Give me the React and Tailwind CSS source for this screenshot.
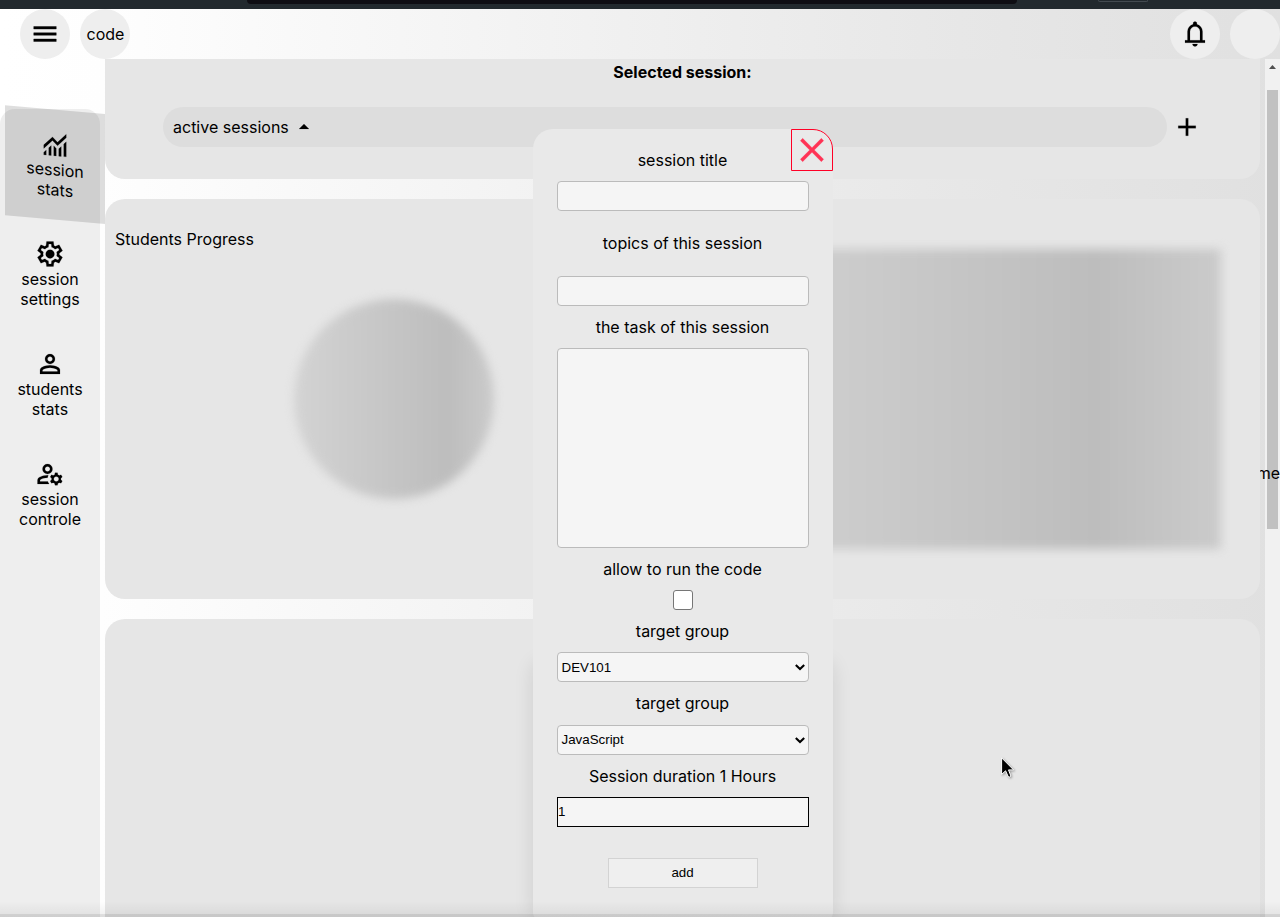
const PATHS = {
  menu: "M120-240v-80h720v80H120Zm0-200v-80h720v80H120Zm0-200v-80h720v80H120Z",
  bell: "M160-200v-80h80v-280q0-83 50-147.5T420-792v-28q0-25 17.5-42.5T480-880q25 0 42.5 17.5T540-820v28q80 20 130 84.5T720-560v280h80v80H160Zm320-300Zm0 420q-33 0-56.5-23.5T400-160h160q0 33-23.5 56.5T480-80ZM320-280h320v-280q0-66-47-113t-113-47q-66 0-113 47t-47 113v280Z",
  add: "M440-440H200v-80h240v-240h80v240h240v80H520v240h-80v-240Z",
  close: "m256-200-56-56 224-224-224-224 56-56 224 224 224-224 56 56-224 224 224 224-56 56-224-224-224 224Z",
  up: "m280-400 200-200 200 200H280Z",
  stats: "M120-120v-80l80-80v160h-80Zm160 0v-240l80-80v320h-80Zm160 0v-320l80 81v239h-80Zm160 0v-239l80-80v319h-80Zm160 0v-400l80-80v480h-80ZM120-327v-113l280-280 160 160 280-280v113L560-447 400-607 120-327Z",
  settings: "m370-80-16-128q-13-5-24.5-12T307-235l-119 50L78-375l103-78q-1-7-1-13.5v-27q0-6.5 1-13.5L78-585l110-190 119 50q11-8 23-15t24-12l16-128h220l16 128q13 5 24.5 12t22.5 15l119-50 110 190-103 78q1 7 1 13.5v27q0 6.5-2 13.5l103 78-110 190-118-50q-11 8-23 15t-24 12L590-80H370Zm70-80h79l14-106q31-8 57.5-23.5T639-327l99 41 39-68-86-65q5-14 7-29.5t2-31.5q0-16-2-31.5t-7-29.5l86-65-39-68-99 42q-22-23-48.5-38.5T533-694l-13-106h-79l-14 106q-31 8-57.5 23.5T321-633l-99-41-39 68 86 64q-5 15-7 30t-2 32q0 16 2 31t7 30l-86 65 39 68 99-42q22 23 48.5 38.5T427-266l13 106Zm42-180q58 0 99-41t41-99q0-58-41-99t-99-41q-59 0-99.5 41T342-480q0 58 40.5 99t99.5 41Zm-2-140Z",
  person: "M480-480q-66 0-113-47t-47-113q0-66 47-113t113-47q66 0 113 47t47 113q0 66-47 113t-113 47ZM160-160v-112q0-34 17.5-62.5T224-378q62-31 126-46.5T480-440q66 0 130 15.5T736-378q29 15 46.5 43.5T800-272v112H160Zm80-80h480v-32q0-11-5.5-20T700-306q-54-27-109-40.5T480-360q-56 0-111 13.5T260-306q-9 5-14.5 14t-5.5 20v32Zm240-320q33 0 56.5-23.5T560-640q0-33-23.5-56.5T480-720q-33 0-56.5 23.5T400-640q0 33 23.5 56.5T480-560Z",
  manage: "M400-480q-66 0-113-47t-47-113q0-66 47-113t113-47q66 0 113 47t47 113q0 66-47 113t-113 47ZM80-160v-112q0-33 17-62t47-44q51-26 115-44t141-18h14q6 0 12 2-8 18-13.5 37.5T404-360h-4q-71 0-127.5 18T180-306q-9 5-14.5 14t-5.5 20v32h252q6 21 16 41.5t22 38.5H80Zm560 40-12-60q-12-5-22.5-10.5T584-204l-58 18-40-68 46-40q-2-14-2-26t2-26l-46-40 40-68 58 18q11-8 21.5-13.5T628-460l12-60h80l12 60q12 5 22.5 11t21.5 15l58-20 40 70-46 40q2 12 2 25t-2 25l46 40-40 68-58-18q-11 8-21.5 13.5T732-180l-12 60h-80Zm40-120q33 0 56.5-23.5T760-320q0-33-23.5-56.5T680-400q-33 0-56.5 23.5T600-320q0 33 23.5 56.5T680-240ZM400-560q33 0 56.5-23.5T480-640q0-33-23.5-56.5T400-720q-33 0-56.5 23.5T320-640q0 33 23.5 56.5T400-560Z",
};

function Icon({ name, size = 30, stroke = 5, className = "" }) {
  return (
    <svg width={size} height={size} viewBox="0 -960 960 960" fill="currentColor" stroke="currentColor" strokeWidth={stroke} className={"block shrink-0 " + className}>
      <path d={PATHS[name]} />
    </svg>
  );
}

const NAV = [
  { icon: "stats", a: "session", b: "stats", active: true },
  { icon: "settings", a: "session", b: "settings" },
  { icon: "person", a: "students", b: "stats" },
  { icon: "manage", a: "session", b: "controle" },
];

function NavItem({ icon, a, b, active }) {
  return (
    <li
      className={
        "flex h-[110px] w-[100px] flex-col items-center py-5 text-center leading-5 " +
        (active ? "translate-x-[5px] translate-y-[0.6px] skew-y-[5deg] bg-black/13" : "")
      }
    >
      <Icon name={icon} />
      <span>{a}</span>
      <span>{b}</span>
    </li>
  );
}

function Header() {
  return (
    <header className="flex h-[50px] shrink-0 items-center justify-between pl-5">
      <div className="flex gap-2.5">
        <button className="flex size-[50px] items-center justify-center rounded-full bg-[#eee]"><Icon name="menu" stroke={12} /></button>
        <div className="flex size-[50px] items-center justify-center rounded-full bg-[#eee] pl-px">code</div>
      </div>
      <div className="flex gap-2.5">
        <button className="flex size-[50px] items-center justify-center rounded-full bg-[#eee]"><Icon name="bell" /></button>
        <div className="size-[50px] rounded-full bg-[#eee]" />
      </div>
    </header>
  );
}

const FIELD = "block h-[30px] w-[252px] rounded-[4px] border border-[#bbb] bg-[#f5f5f5]";

function Select({ value, className = "" }) {
  return (
    <div className={FIELD + " flex items-center justify-between pr-[3px] pl-[3.5px] font-['Liberation_Sans',sans-serif] text-[13.333px] " + className}>
      <span>{value}</span>
      <svg width="10" height="7" viewBox="0 0 10 7" fill="none" stroke="#000" strokeWidth="2.1" className="block">
        <path d="M0.8 1 L5 5 L9.2 1" />
      </svg>
    </div>
  );
}

function Modal() {
  return (
    <div className="absolute top-[129px] left-[533px] h-[790px] w-[300px]">
      <div className="absolute inset-x-0 top-[533px] bottom-0 rounded-[10px] shadow-[0_0_20px_rgba(0,0,0,0.11)]" />
      <form className="relative flex h-full flex-col items-center rounded-t-[20px] rounded-b-[6px] bg-[#e9e9e9] pt-[21px] leading-5">
        <button type="button" className="absolute top-0 right-0 flex size-[42px] items-center justify-center rounded-tr-[20px] border border-[#ff0026] text-[#ff3355]">
          <Icon name="close" size={40} stroke={6} />
        </button>
        <label className="pr-px">session title</label>
        <input className={FIELD + " mt-[11px]"} />
        <label className="mt-[22px] pr-px">topics of this session</label>
        <input className={FIELD + " mt-[23px]"} />
        <label className="mt-[11px] pr-px">the task of this session</label>
        <textarea className="mt-[11px] block h-[200px] w-[252px] resize-none rounded-[4px] border border-[#bbb] bg-[#f5f5f5]" />
        <label className="mt-[11px] pr-px">allow to run the code</label>
        <span className="mt-[11px] size-5 rounded-[3px] border border-[#767676] bg-white" />
        <label className="mt-[11px] pr-px">target group</label>
        <Select value="DEV101" className="mt-[11px] pt-px" />
        <label className="mt-[11px] pr-px">target group</label>
        <Select value="JavaScript" className="mt-[12px]" />
        <label className="mt-[11px] pr-px">Session duration 1 Hours</label>
        <input defaultValue="1" className="mt-[11px] block h-[30px] w-[252px] border border-black bg-[#f5f5f5] pb-0.5 font-['Liberation_Sans',sans-serif] text-[13.333px]" />
        <button type="button" className="mt-[31px] h-[30px] w-[150px] border border-[#d3d3d3] bg-[#efefef] pr-px font-['Liberation_Sans',sans-serif] text-[13.333px]">
          add
        </button>
      </form>
    </div>
  );
}

export default function App() {
  return (
    <div className="relative flex h-[917px] w-[1280px] flex-col overflow-hidden bg-[linear-gradient(to_right,#fff_0%,#fefefe_8%,#e7e7e7_75%,#e0e0e0_100%)] font-['Inter',sans-serif] text-base text-black">
      <div className="flex h-[9px] shrink-0 bg-[#22292e]">
        <div className="ml-[247px] h-1 w-[770px] rounded-b-[5px] bg-[#0e0d13]" />
        <div className="ml-[81px] h-0.5 w-[50px] rounded-b-[4px] border-x border-b border-[#434a50]" />
      </div>
      <Header />
      <div className="flex min-h-0 grow">
        <nav className="mt-[50px] w-[100px] shrink-0 rounded-t-[15px] bg-[#eee]">
          <ul>
            {NAV.map((n, i) => <NavItem key={i} {...n} />)}
          </ul>
        </nav>
        <main className="ml-[5px] flex w-[1155px] shrink-0 flex-col gap-5 overflow-hidden">
          <section className="flex h-[120px] shrink-0 flex-col items-center rounded-b-[20px] bg-[#e6e6e6] pt-[3px]">
            <h1 className="leading-5 font-bold">Selected session:</h1>
            <div className="mt-[25px] flex w-[1039px] items-center gap-[5px]">
              <div className="flex h-10 grow items-center rounded-full bg-[#ddd] pl-2.5">
                active sessions
                <Icon name="up" size={24} className="ml-[3px]" />
              </div>
              <Icon name="add" />
            </div>
          </section>
          <section className="flex h-[400px] shrink-0 rounded-[20px] bg-[#e6e6e6]">
            <h2 className="w-[189px] pt-[30px] pl-2.5 leading-5">Students Progress</h2>
            <div className="mt-[100px] size-[200px] rounded-full bg-[linear-gradient(to_right,#d3d3d3,#bdbdbd_77%,#cbcbcb)] blur-[5px]" />
            <div className="mt-[50px] ml-[227px] h-[300px] w-[500px] bg-[linear-gradient(to_right,#d3d3d3,#bdbdbd_75%,#cbcbcb)] blur-[5px]" />
          </section>
          <section className="h-[400px] shrink-0 rounded-[20px] bg-[#e6e6e6]" />
        </main>
        <aside className="ml-[5px] flex w-[15px] shrink-0 flex-col items-center bg-[#f1f1f1]">
          <svg width="7" height="4" viewBox="0 0 7 4" fill="#505050" className="mt-1.5 block"><path d="M0 4 L3.5 0 L7 4 Z" /></svg>
          <div className="mt-[21px] h-[439px] w-[11px] bg-[#c1c1c1]" />
        </aside>
      </div>
      <div className="absolute top-[463px] right-0 flex w-5 justify-end overflow-hidden leading-5">me</div>
      <Modal />
      <div className="absolute inset-x-0 bottom-0 h-4 bg-linear-to-b from-black/0 to-black/6" />
      <div className="absolute inset-x-0 bottom-0 h-[3px] bg-black/8" />
      <svg width="16" height="22" viewBox="0 0 16 22" className="absolute top-[757px] left-[1001px] drop-shadow-[1px_1px_1px_rgba(0,0,0,0.35)]">
        <path d="M0.6 0.8 V17.4 L4.6 13.8 L7.2 19.6 Q8.6 20.6 9.9 19.1 L7.5 12.9 H12.6 Z" fill="#000" stroke="#fff" strokeWidth="1" />
      </svg>
    </div>
  );
}
